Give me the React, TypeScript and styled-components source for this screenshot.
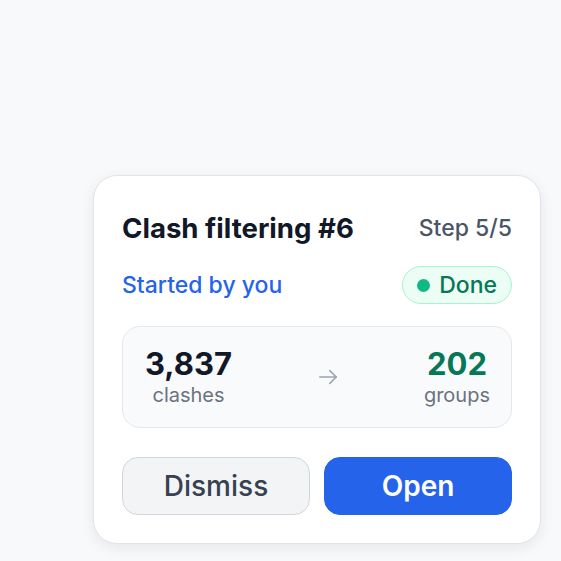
import React, { FC } from "react";
import styled, { createGlobalStyle } from "styled-components";

const GlobalStyle = createGlobalStyle`
    * {
        box-sizing: border-box;
    }
    html, body {
        margin: 0;
        padding: 0;
        background: #f8f9fb;
        font-family: Inter, "Noto Sans", sans-serif;
    }
`;

const Page = styled.div`
    min-height: 100vh;
    display: flex;
    justify-content: flex-end;
    align-items: flex-end;
    padding: 0 20px 17px 0;
`;

const Card = styled.div`
    width: 448px;
    background: #fff;
    border: 1px solid #e2e4e8;
    border-radius: 24px;
    box-shadow: 0 4px 14px rgba(17, 24, 39, 0.08);
    padding: 34px 28px 28px;
    display: flex;
    flex-direction: column;
`;

const Row = styled.div<{ $gap?: number }>`
    display: flex;
    justify-content: space-between;
    align-items: center;
    margin-top: ${(p) => p.$gap ?? 0}px;
`;

const Title = styled.div`
    font-size: 27.6px;
    line-height: 36px;
    font-weight: 700;
    color: #111827;
`;

const Step = styled.div`
    font-size: 23px;
    color: #4b5563;
    font-weight: 500;
`;

const StartedBy = styled.div`
    font-size: 23px;
    color: #2563eb;
    font-weight: 500;
`;

const Badge = styled.div`
    height: 38px;
    display: flex;
    align-items: center;
    gap: 9px;
    padding: 0 14px 0 14px;
    border-radius: 999px;
    background: #ecfdf5;
    border: 1px solid #a7f3d0;
    color: #047857;
    font-size: 23px;
    font-weight: 500;
`;

const Dot = styled.span`
    width: 13px;
    height: 13px;
    border-radius: 50%;
    background: #10b981;
`;

const Stats = styled.div`
    margin-top: 22px;
    height: 102px;
    display: flex;
    justify-content: space-between;
    align-items: center;
    padding: 0 21px 0 22px;
    background: #f9fafb;
    border: 1px solid #e5e7eb;
    border-radius: 18px;
`;

const Stat = styled.div`
    display: flex;
    flex-direction: column;
    align-items: center;
`;

const Value = styled.div<{ $accent?: boolean }>`
    font-size: 31px;
    line-height: 36px;
    font-weight: 700;
    color: ${(p) => (p.$accent ? "#047857" : "#111827")};
`;

const Label = styled.div`
    font-size: 20px;
    line-height: 26px;
    color: #6b7280;
`;

const Arrow = styled.svg`
    width: 22px;
    height: 22px;
    color: #9ca3af;
`;

const Actions = styled.div`
    margin-top: 29px;
    display: flex;
    gap: 14px;
`;

const Button = styled.button<{ $primary?: boolean }>`
    flex: 1;
    height: 58px;
    border-radius: 16px;
    font-family: inherit;
    font-size: 28px;
    font-weight: ${(p) => (p.$primary ? 600 : 500)};
    color: ${(p) => (p.$primary ? "#fff" : "#374151")};
    background: ${(p) => (p.$primary ? "#2563eb" : "#f3f4f6")};
    border: 1px solid ${(p) => (p.$primary ? "#2563eb" : "#d1d5db")};
    cursor: pointer;
`;

const App: FC = () => {
    return (
        <React.Fragment>
            <GlobalStyle />
            <Page>
                <Card>
                    <Row>
                        <Title>Clash filtering #6</Title>
                        <Step>Step 5/5</Step>
                    </Row>
                    <Row $gap={20}>
                        <StartedBy>Started by you</StartedBy>
                        <Badge>
                            <Dot />
                            Done
                        </Badge>
                    </Row>
                    <Stats>
                        <Stat>
                            <Value>3,837</Value>
                            <Label>clashes</Label>
                        </Stat>
                        <Arrow viewBox="0 0 24 24" fill="none" stroke="currentColor" strokeWidth={1.7} strokeLinecap="round" strokeLinejoin="round">
                            <path d="M3 12h18" />
                            <path d="M14 5l7 7-7 7" />
                        </Arrow>
                        <Stat>
                            <Value $accent>202</Value>
                            <Label>groups</Label>
                        </Stat>
                    </Stats>
                    <Actions>
                        <Button>Dismiss</Button>
                        <Button $primary>Open</Button>
                    </Actions>
                </Card>
            </Page>
        </React.Fragment>
    );
};

export default App;
